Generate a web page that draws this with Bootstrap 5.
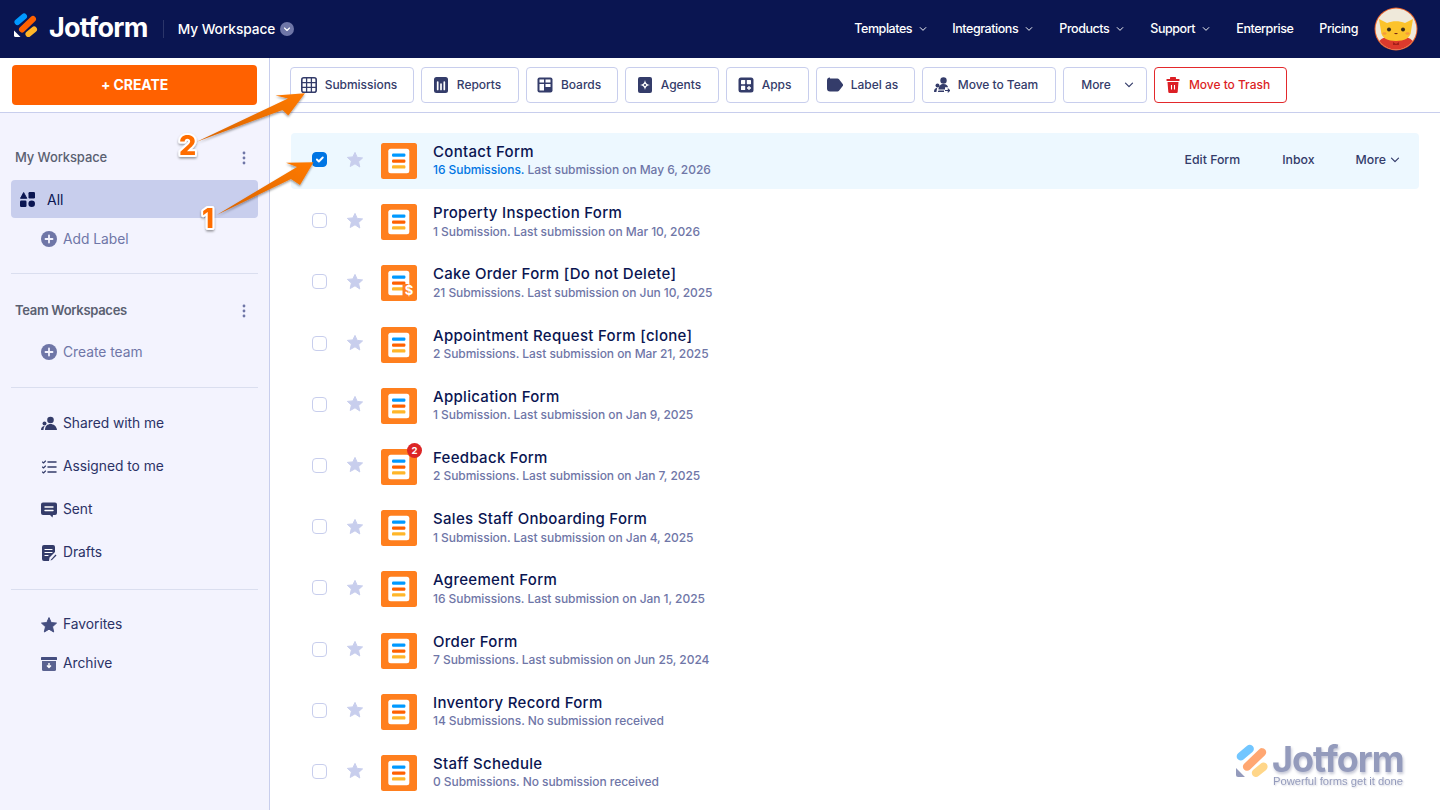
<!DOCTYPE html>
<html lang="en"><head><meta charset="utf-8"><title>Jotform</title>
<link href="https://cdn.jsdelivr.net/npm/bootstrap@5.3.0/dist/css/bootstrap.min.css" rel="stylesheet">
<style>
html,body{height:810px;overflow:hidden}
body{font-family:Inter,"Noto Sans",sans-serif;color:#0a1551;background:#fff;position:relative}
.jf-nav{height:58px;background:#0a1551;padding:0 22px 0 14px;flex-wrap:nowrap}
.jf-logo{width:24px;height:24px;display:block;color:#fff;margin-top:-8px}
.jf-brand{font-size:27px;font-weight:700;color:#fff;letter-spacing:-.75px;line-height:1;margin:-4px 0 0 11px}
.jf-sep{width:1px;height:18px;background:#2b3569;margin:0 14px 0 15px}
.jf-ws{color:#fff;font-size:13.7px;font-weight:500;letter-spacing:-.05px}
.jf-caret{width:14px;height:14px;margin-left:5px}
.jf-links{gap:0;font-size:12.5px;font-weight:500;letter-spacing:-.45px;color:#fff;margin-right:16px}
.jf-links span{display:inline-flex;align-items:center}
.jf-links svg{margin-left:7px}
.jf-l1{width:98px}.jf-l2{width:107px}.jf-l3{width:91px}.jf-l4{width:86px}.jf-l5{width:83px}
.jf-avatar{width:44px;height:44px;display:block}
.jf-body{height:752px}
.jf-side{width:270px;background:#f3f3fe;border-right:1px solid #c8ceed;flex:none}
.jf-createzone{height:55px;background:#fff;border-bottom:1px solid #c8ceed;padding:7px 12px 0}
.jf-create{width:245px;height:40px;background:#ff6100;border:0;border-radius:4px;color:#fff;font-weight:700;font-size:14px;letter-spacing:-.1px;padding:0 0 2px}
.jf-create:hover{background:#ff6100;color:#fff}
.jf-head{height:24px;margin:33px 23px 10px 15px;font-size:13px;font-weight:500;color:#5a6071;letter-spacing:-.1px}
.jf-head.second{margin:25px 23px 11px 15px;font-weight:600;letter-spacing:-.3px}
.jf-dots{width:4px;height:14px}
.jf-all{height:38px;margin:0 11px;background:#c8ceed;border-radius:4px;padding-left:9px;font-size:14px;gap:12px;color:#0a1551}
.jf-item{padding-left:41px;gap:6px;font-size:13.8px;color:#2b3266;letter-spacing:-.02px}
.jf-item span{margin-top:-1px}
.jf-item svg{width:16px;height:16px;flex:none}
.jf-soft{color:#6f76a7;height:36px}
.jf-soft span{margin-top:0}
.jf-soft.first{margin-top:3px}
.jf-h43{height:43px}.jf-h39{height:39px}
.jf-rule{height:1px;background:#dadeef;margin:16px 11px 0}
.jf-rule.r2{margin-top:17px;margin-bottom:14px}
.jf-rule.r3{margin-top:15px;margin-bottom:15px}
.jf-tools{height:55px;border-bottom:1px solid #c8ceed;padding:9px 0 0 20px;gap:7px}
.jf-tool{height:36px;background:#fff;border:1px solid #c8ceed;border-radius:4px;padding:0 6px 0 0;font-size:12px;color:#343c6a;font-weight:500;display:flex;align-items:center;justify-content:center;gap:8px;letter-spacing:-.03px;flex:none}
.jf-tool:hover{background:#fff;color:#343c6a;border-color:#c8ceed}
.jf-tool svg{width:16px;height:16px;flex:none}
.t1{width:124px}.t2{width:98px}.t3{width:92px}.t4{width:94px}.t5{width:83px}.t6{width:99px}.t7{width:134px}.t8{width:84px}.t9{width:133px}
.t8{gap:13px;padding:0 0 0 5px}
.t9,.t9:hover{border-color:#e3292c;color:#dc1f25}
.jf-list{padding:20px 21px 0}
.jf-row{height:56px;margin-bottom:5.2px;padding-left:21px;border-radius:4px}
.jf-row.on{background:#edf8ff}
.jf-check{width:15px;height:15px;margin:0 0 3px;flex:none;border:1px solid #c8ceed;border-radius:3px;background-color:#fff;cursor:pointer}
.jf-check:checked{background-color:#0075e3;border-color:#0075e3}
.jf-star{width:16px;height:16px;margin:0 18px 3px 20px;flex:none}
.jf-formic{width:36px;height:36px;position:relative;flex:none;margin-right:16px}
.jf-formic svg{width:36px;height:36px;display:block}
.jf-badge{position:absolute;right:-5px;top:-6px;width:15px;height:15px;border-radius:50%;background:#dc2626;color:#fff;font-size:9.5px;font-weight:700;display:flex;align-items:center;justify-content:center;line-height:1}
.jf-title{font-size:15px;font-weight:500;color:#0a1551;line-height:19px;letter-spacing:.3px;margin-top:-.6px}
.jf-sub{font-size:12px;color:#6f76a7;font-weight:500;line-height:18px;letter-spacing:-.06px;margin-top:.4px}
.jf-sub b{font-weight:500}
.on .jf-sub b{color:#0075e3}
.jf-acts{margin-left:auto;font-size:12.3px;font-weight:500;color:#343c6a;padding-right:19px;margin-top:-2px}
.jf-a1{margin-right:42px}.jf-a2{margin-right:41px}
.jf-over{position:absolute;left:0;top:0;pointer-events:none;overflow:visible}
.jf-mark{position:absolute;left:1236px;top:742px;width:190px;height:56px;opacity:.55;pointer-events:none;color:#3d4a86}
.jf-mark svg{position:absolute;left:0;top:2px}
.jf-mwords{position:absolute;left:36px;top:1px;font-size:36px;font-weight:700;letter-spacing:-1px;line-height:32px;color:#3d4a86;text-shadow:1px 2px 3px rgba(10,21,81,.45)}
.jf-mtag{position:absolute;left:37px;top:33px;font-family:"Liberation Sans",Arial,sans-serif;font-size:11.2px;line-height:13px;color:#3d4a86;white-space:nowrap;text-shadow:1px 1px 2px rgba(10,21,81,.35)}
</style></head>
<body>
<svg width="0" height="0" class="position-absolute">
<defs>
<symbol id="fi" viewBox="0 0 36 36"><rect width="36" height="36" rx="2.5" fill="#ff7f1e"/><rect x="7.3" y="5.7" width="21" height="24.6" rx="2.5" fill="#fff"/><rect x="11" y="10.4" width="13.4" height="3.4" rx="1.2" fill="#09f"/><rect x="11" y="16.4" width="13.4" height="3.4" rx="1.2" fill="#ff6100"/><rect x="11" y="22.2" width="13.4" height="3.4" rx="1.2" fill="#ffb629"/></symbol>
<symbol id="st" viewBox="0 0 16 16"><path d="M8 .4l2.200 5 5.400.5-4 3.700 1.200 5.400L8 11.800l-4.800 2.700 1.200-5.400-4-3.700 5.400-.5z" fill="#c8ceed" stroke="#c8ceed" stroke-linejoin="round"/></symbol>
<symbol id="ch" viewBox="0 0 10 10"><path d="M1.500 3.200l3.500 3.500 3.500-3.500" fill="none" stroke="currentColor" stroke-width="1.200" stroke-linecap="round" stroke-linejoin="round"/></symbol>
<symbol id="pl" viewBox="0 0 16 16"><circle cx="8" cy="8" r="8" fill="#6f76a7"/><path d="M8 4.500v7M4.500 8h7" stroke="#f3f3fe" stroke-width="1.800" stroke-linecap="round"/></symbol>
<symbol id="dt" viewBox="0 0 4 14"><circle cx="2" cy="2" r="1.400" fill="#6f76a7"/><circle cx="2" cy="7" r="1.400" fill="#6f76a7"/><circle cx="2" cy="12" r="1.400" fill="#6f76a7"/></symbol>
<symbol id="lg" viewBox="0 0 24 24"><path d="M3.500 9L10 3.500" stroke="#09f" stroke-width="6" stroke-linecap="round"/><path d="M8 16.500L19 6" stroke="#ff6100" stroke-width="6" stroke-linecap="round"/><path d="M14.500 21L20 16.500" stroke="#ffb629" stroke-width="6" stroke-linecap="round"/><path d="M0 17.500L6.500 24h-5A1.500 1.500 0 0 1 0 22.500z" fill="currentColor"/></symbol>
</defs></svg>

<nav class="navbar navbar-expand jf-nav d-flex align-items-center justify-content-between">
  <div class="d-flex align-items-center">
    <svg class="jf-logo"><use href="#lg"/></svg>
    <span class="jf-brand">Jotform</span>
    <span class="jf-sep"></span>
    <span class="jf-ws">My Workspace</span>
    <svg class="jf-caret" viewBox="0 0 14 14"><circle cx="7" cy="7" r="7" fill="#6f76a7"/><path d="M4.500 6l2.500 2.500L9.500 6" fill="none" stroke="#fff" stroke-width="1.100" stroke-linecap="round" stroke-linejoin="round"/></svg>
  </div>
  <div class="d-flex align-items-center">
    <div class="d-flex align-items-center jf-links">
      <span class="jf-l1">Templates<svg width="8" height="8"><use href="#ch"/></svg></span>
      <span class="jf-l2">Integrations<svg width="8" height="8"><use href="#ch"/></svg></span>
      <span class="jf-l3">Products<svg width="8" height="8"><use href="#ch"/></svg></span>
      <span class="jf-l4">Support<svg width="8" height="8"><use href="#ch"/></svg></span>
      <span class="jf-l5">Enterprise</span>
      <span>Pricing</span>
    </div>
    <svg class="jf-avatar" viewBox="0 0 44 44">
      <defs><clipPath id="av"><circle cx="22" cy="22" r="20.500"/></clipPath></defs>
      <circle cx="22" cy="22" r="21.500" fill="#e8622a"/>
      <g clip-path="url(#av)"><rect width="44" height="44" fill="#efe9da"/>
      <path d="M2 44c0-12 8-15 20-15s20 3 20 15z" fill="#dc3a2c"/>
      <path d="M5 12l8 4c6-2.500 12-2.500 18 0l8-4-2 12c0 7-7 10-15 10S7 31 7 24z" fill="#fcc32b"/>
      <circle cx="15" cy="22.500" r="2" fill="#3a2c1a"/><circle cx="29" cy="22.500" r="2" fill="#3a2c1a"/>
      <ellipse cx="10.500" cy="26.500" rx="2" ry="1.300" fill="#f59a3c"/><ellipse cx="33.500" cy="26.500" rx="2" ry="1.300" fill="#f59a3c"/>
      <path d="M20 26q2 2.500 4 0z" fill="#7a2a18"/>
      <path d="M19 35l3 2 3-2v3h-6z" fill="#a4201a"/></g>
    </svg>
  </div>
</nav>

<div class="d-flex jf-body">
  <aside class="jf-side">
    <div class="jf-createzone"><button class="btn jf-create" type="button">+ CREATE</button></div>
    <div class="jf-head d-flex align-items-center justify-content-between"><span>My Workspace</span><svg class="jf-dots"><use href="#dt"/></svg></div>
    <div class="jf-all d-flex align-items-center"><svg width="15" height="15" viewBox="0 0 15 15"><path d="M3.500 0L7 6.500H0z" fill="#0a1551" stroke="#0a1551" stroke-linejoin="round" transform="translate(.5 .5) scale(.9)"/><rect x="8.500" y="0" width="6.500" height="6.500" rx="1.200" fill="#0a1551"/><rect x="0" y="8.500" width="6.500" height="6.500" rx="1.200" fill="#0a1551"/><circle cx="11.700" cy="11.700" r="3.300" fill="#0a1551"/></svg><span>All</span></div>
    <div class="jf-item jf-soft first d-flex align-items-center"><svg><use href="#pl"/></svg><span>Add Label</span></div>
    <div class="jf-rule"></div>
    <div class="jf-head second d-flex align-items-center justify-content-between"><span>Team Workspaces</span><svg class="jf-dots"><use href="#dt"/></svg></div>
    <div class="jf-item jf-soft d-flex align-items-center"><svg><use href="#pl"/></svg><span>Create team</span></div>
    <div class="jf-rule r2"></div>
    <div class="jf-item jf-h43 d-flex align-items-center"><svg viewBox="0 0 16 16"><circle cx="9.500" cy="4" r="3.300" fill="#343c6a"/><path d="M4 14c0-4 2.500-6 5.500-6s6 2 6.500 6z" fill="#343c6a"/><circle cx="3.500" cy="7.500" r="2" fill="#343c6a"/><path d="M0 14c0-2.500 1.500-4 3.800-4-.8 1-1.300 2.500-1.300 4z" fill="#343c6a"/></svg><span>Shared with me</span></div>
    <div class="jf-item jf-h43 d-flex align-items-center"><svg viewBox="0 0 16 16"><path d="M7 3h8M7 8h8M7 13h8" stroke="#343c6a" stroke-width="1.500" stroke-linecap="round"/><path d="M1.500 3l1 1 2-2M1.500 8l1 1 2-2M1.500 13l1 1 2-2" fill="none" stroke="#343c6a" stroke-width="1.100" stroke-linecap="round" stroke-linejoin="round"/></svg><span>Assigned to me</span></div>
    <div class="jf-item jf-h43 d-flex align-items-center"><svg viewBox="0 0 16 16"><path d="M2 .5h12a2 2 0 0 1 2 2v8.500a2 2 0 0 1-2 2h-2l-.5 2.500-2.500-2.500H2a2 2 0 0 1-2-2V2.500a2 2 0 0 1 2-2z" fill="#343c6a"/><path d="M4 5h8M4 8.500h8" stroke="#fff" stroke-width="1.400" stroke-linecap="round"/></svg><span>Sent</span></div>
    <div class="jf-item jf-h43 d-flex align-items-center"><svg viewBox="0 0 16 16"><path d="M3 0h9a2 2 0 0 1 2 2v5l-5.500 5.500-.5 3.500H3a2 2 0 0 1-2-2V2a2 2 0 0 1 2-2z" fill="#343c6a"/><path d="M4 4.500h7M4 7.500h7M4 10.500h3" stroke="#fff" stroke-width="1.200" stroke-linecap="round"/><path d="M10 14.500l-.5 1 1.500-.5 4.500-4.500-1-1z" fill="#343c6a"/></svg><span>Drafts</span></div>
    <div class="jf-rule r3"></div>
    <div class="jf-item jf-h39 d-flex align-items-center"><svg viewBox="0 0 16 16"><path d="M8 .6l2.200 5 5.300.5-4 3.600 1.200 5.300L8 12.200 3.300 15l1.200-5.300-4-3.600 5.300-.5z" fill="#454e80" stroke="#454e80" stroke-linejoin="round"/></svg><span>Favorites</span></div>
    <div class="jf-item jf-h39 d-flex align-items-center"><svg viewBox="0 0 16 16"><rect x="0" y="1" width="16" height="3" rx=".6" fill="#454e80"/><path d="M1 5h14v8.500a1.500 1.500 0 0 1-1.500 1.500h-11A1.500 1.500 0 0 1 1 13.500z" fill="#5a6290"/><path d="M8 7v4M6 9.500l2 2 2-2" fill="none" stroke="#fff" stroke-width="1.400" stroke-linejoin="round"/></svg><span>Archive</span></div>
  </aside>

  <main class="flex-grow-1">
    <div class="jf-tools d-flex">
      <button class="btn jf-tool t1" type="button"><svg viewBox="0 0 16 16"><rect x=".8" y=".8" width="14.400" height="14.400" rx="2" fill="none" stroke="#343c6a" stroke-width="1.600"/><path d="M5.600 1v14M10.400 1v14M1 5.600h14M1 10.400h14" stroke="#343c6a" stroke-width="1.300"/></svg>Submissions</button>
      <button class="btn jf-tool t2" type="button"><svg viewBox="0 0 16 16"><rect width="14" height="16" x="1" rx="2.500" fill="#343c6a"/><path d="M4.700 5v7.500M8 7v5.500M11.300 5v7.500" stroke="#fff" stroke-width="1.700" stroke-linecap="round"/></svg>Reports</button>
      <button class="btn jf-tool t3" type="button"><svg viewBox="0 0 16 16"><rect width="15" height="15" y=".5" x=".5" rx="2" fill="#343c6a"/><path fill="#fff" d="M2.500 2.500h4.500v3H2.500zM8.500 2.500h5v3h-5zM2.500 7h4.500v6.500H2.500zM8.500 7h5v3h-5z"/></svg>Boards</button>
      <button class="btn jf-tool t4" type="button"><svg viewBox="0 0 16 16"><rect width="14" height="16" x="1" rx="2" fill="#343c6a"/><path d="M8 3c.4 2.900 2 4.600 5 5-3 .4-4.600 2.100-5 5-.4-2.900-2-4.600-5-5 3-.4 4.600-2.100 5-5z" fill="#fff"/><circle cx="8" cy="8" r="1.100" fill="#343c6a"/></svg>Agents</button>
      <button class="btn jf-tool t5" type="button"><svg viewBox="0 0 16 16"><rect width="15" height="15" x=".5" y=".5" rx="2.500" fill="#343c6a"/><rect x="3" y="3" width="4.200" height="4.200" rx=".6" fill="#fff"/><rect x="8.800" y="3" width="4.200" height="4.200" rx=".6" fill="#fff"/><rect x="3" y="8.800" width="4.200" height="4.200" rx=".6" fill="#fff"/><path d="M11 9v4M9 11h4" stroke="#fff" stroke-width="1.300"/></svg>Apps</button>
      <button class="btn jf-tool t6" type="button"><svg viewBox="0 0 16 16"><path d="M3 1.500h7.500a2 2 0 0 1 1.500.7l3.500 4.500a2 2 0 0 1 0 2.600L12 13.800a2 2 0 0 1-1.500.7H3a3 3 0 0 1-3-3v-8a3 3 0 0 1 3-3z" fill="#343c6a"/></svg>Label as</button>
      <button class="btn jf-tool t7" type="button"><svg viewBox="0 0 16 16"><circle cx="9.500" cy="3.500" r="3.200" fill="#343c6a"/><path d="M4.500 12.500c0-3.500 2.200-5.500 5-5.500s4.200 1.300 4.600 3.300H11v2.200z" fill="#343c6a"/><circle cx="3.500" cy="8.500" r="2" fill="#343c6a"/><path d="M0 15c0-2.400 1-3.800 3.200-4.200l-.8 4.200zM3.800 15l.7-1.500h5.500V15z" fill="#343c6a"/><path d="M11 13.500h4.500M13.700 11.700l1.900 1.800-1.900 1.800" fill="none" stroke="#343c6a" stroke-width="1.100"/></svg>Move to Team</button>
      <button class="btn jf-tool t8" type="button">More<svg viewBox="0 0 10 10" style="width:10px;height:10px"><use href="#ch"/></svg></button>
      <button class="btn jf-tool t9" type="button"><svg viewBox="0 0 16 16"><rect x="1.500" y="2" width="13" height="2" rx=".6" fill="#dc1f25"/><rect x="5" y="0" width="6" height="2" rx=".6" fill="#dc1f25"/><path d="M2.500 5h11l-.8 10a1.200 1.200 0 0 1-1.200 1h-7a1.200 1.200 0 0 1-1.200-1z" fill="#dc1f25"/><path d="M6.500 8v4.500M9.500 8v4.500" stroke="#fff" stroke-width="1.100"/></svg>Move to Trash</button>
    </div>
    <div class="jf-list">
      <div class="jf-row on d-flex align-items-center"><input class="form-check-input jf-check" type="checkbox" checked aria-label="select"><svg class="jf-star"><use href="#st"/></svg><div class="jf-formic"><svg><use href="#fi"/></svg></div><div><div class="jf-title">Contact Form</div><div class="jf-sub"><b>16 Submissions.</b> Last submission on May 6, 2026</div></div>
        <div class="jf-acts d-flex align-items-center"><span class="jf-a1">Edit Form</span><span class="jf-a2">Inbox</span><span class="d-inline-flex align-items-center">More<svg width="10" height="10" class="ms-1"><use href="#ch"/></svg></span></div></div>
      <div class="jf-row d-flex align-items-center"><input class="form-check-input jf-check" type="checkbox" aria-label="select"><svg class="jf-star"><use href="#st"/></svg><div class="jf-formic"><svg><use href="#fi"/></svg></div><div><div class="jf-title">Property Inspection Form</div><div class="jf-sub">1 Submission. Last submission on Mar 10, 2026</div></div></div>
      <div class="jf-row d-flex align-items-center"><input class="form-check-input jf-check" type="checkbox" aria-label="select"><svg class="jf-star"><use href="#st"/></svg><div class="jf-formic"><svg viewBox="0 0 36 36"><use href="#fi" width="36" height="36"/><rect x="21.500" y="19" width="14" height="14" fill="#ff7f1e"/><text x="28" y="30" text-anchor="middle" font-size="13" font-weight="700" fill="#fff" font-family="Inter,sans-serif">$</text></svg></div><div><div class="jf-title">Cake Order Form [Do not Delete]</div><div class="jf-sub">21 Submissions. Last submission on Jun 10, 2025</div></div></div>
      <div class="jf-row d-flex align-items-center"><input class="form-check-input jf-check" type="checkbox" aria-label="select"><svg class="jf-star"><use href="#st"/></svg><div class="jf-formic"><svg><use href="#fi"/></svg></div><div><div class="jf-title">Appointment Request Form [clone]</div><div class="jf-sub">2 Submissions. Last submission on Mar 21, 2025</div></div></div>
      <div class="jf-row d-flex align-items-center"><input class="form-check-input jf-check" type="checkbox" aria-label="select"><svg class="jf-star"><use href="#st"/></svg><div class="jf-formic"><svg><use href="#fi"/></svg></div><div><div class="jf-title">Application Form</div><div class="jf-sub">1 Submission. Last submission on Jan 9, 2025</div></div></div>
      <div class="jf-row d-flex align-items-center"><input class="form-check-input jf-check" type="checkbox" aria-label="select"><svg class="jf-star"><use href="#st"/></svg><div class="jf-formic"><svg><use href="#fi"/></svg><span class="jf-badge">2</span></div><div><div class="jf-title">Feedback Form</div><div class="jf-sub">2 Submissions. Last submission on Jan 7, 2025</div></div></div>
      <div class="jf-row d-flex align-items-center"><input class="form-check-input jf-check" type="checkbox" aria-label="select"><svg class="jf-star"><use href="#st"/></svg><div class="jf-formic"><svg><use href="#fi"/></svg></div><div><div class="jf-title">Sales Staff Onboarding Form</div><div class="jf-sub">1 Submission. Last submission on Jan 4, 2025</div></div></div>
      <div class="jf-row d-flex align-items-center"><input class="form-check-input jf-check" type="checkbox" aria-label="select"><svg class="jf-star"><use href="#st"/></svg><div class="jf-formic"><svg><use href="#fi"/></svg></div><div><div class="jf-title">Agreement Form</div><div class="jf-sub">16 Submissions. Last submission on Jan 1, 2025</div></div></div>
      <div class="jf-row d-flex align-items-center"><input class="form-check-input jf-check" type="checkbox" aria-label="select"><svg class="jf-star"><use href="#st"/></svg><div class="jf-formic"><svg><use href="#fi"/></svg></div><div><div class="jf-title">Order Form</div><div class="jf-sub">7 Submissions. Last submission on Jun 25, 2024</div></div></div>
      <div class="jf-row d-flex align-items-center"><input class="form-check-input jf-check" type="checkbox" aria-label="select"><svg class="jf-star"><use href="#st"/></svg><div class="jf-formic"><svg><use href="#fi"/></svg></div><div><div class="jf-title">Inventory Record Form</div><div class="jf-sub">14 Submissions. No submission received</div></div></div>
      <div class="jf-row d-flex align-items-center"><input class="form-check-input jf-check" type="checkbox" aria-label="select"><svg class="jf-star"><use href="#st"/></svg><div class="jf-formic"><svg><use href="#fi"/></svg></div><div><div class="jf-title">Staff Schedule</div><div class="jf-sub">0 Submissions. No submission received</div></div></div>
    </div>
  </main>
</div>

<div class="jf-mark"><svg width="33" height="33"><use href="#lg"/></svg><div class="jf-mwords">Jotform</div><div class="jf-mtag">Powerful forms get it done</div></div>

<svg class="jf-over" width="1440" height="810" viewBox="0 0 1440 810">
  <defs>
    <linearGradient id="ag" x1="0" y1="1" x2="1" y2="0"><stop offset="0" stop-color="#d96405"/><stop offset="1" stop-color="#ff7a05"/></linearGradient>
    <filter id="sh" x="-20%" y="-20%" width="140%" height="140%"><feDropShadow dx="0" dy="1.500" stdDeviation="1" flood-color="#000" flood-opacity=".4"/></filter>
  </defs>
  <path d="M216.700 215L297 167 286 162.800 313.500 162.300 300 185 291 179z" fill="url(#ag)" filter="url(#sh)"/>
  <path d="M196.700 141.700L288 98.500 275.500 95.500 305 93.300 288.300 115.500 282.500 110z" fill="url(#ag)" filter="url(#sh)"/>
  <g font-family="Inter,sans-serif" font-weight="800" font-size="27" text-anchor="middle" fill="#ff6d00" stroke="#fff" stroke-width="4" stroke-linejoin="round" paint-order="stroke" filter="url(#sh)">
    <text x="187.500" y="155">2</text>
    <text x="208" y="228">1</text>
  </g>
</svg>
<script src="https://cdn.jsdelivr.net/npm/bootstrap@5.3.0/dist/js/bootstrap.bundle.min.js"></script>
</body></html>
